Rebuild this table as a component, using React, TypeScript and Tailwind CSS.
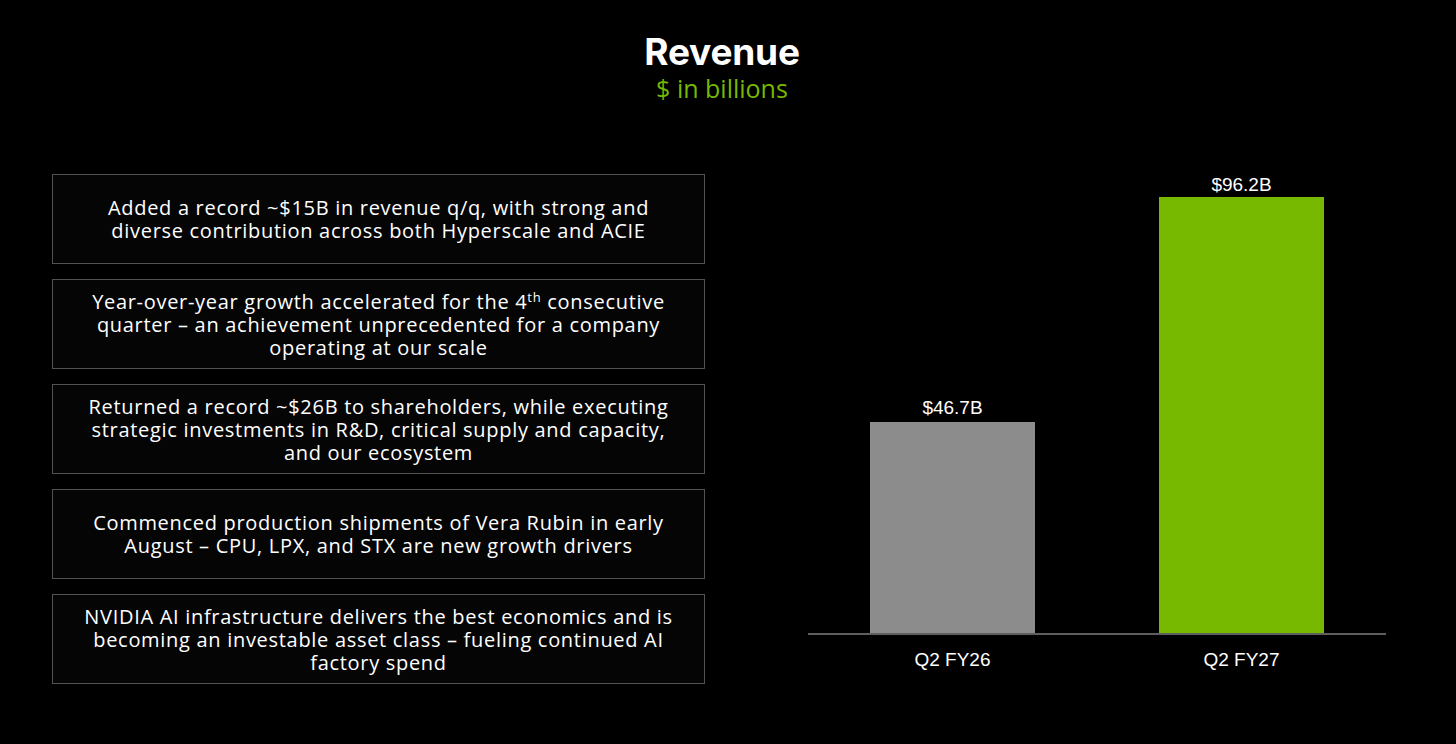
import React from "react";

const boxes: React.ReactNode[][] = [
  [
    "Added a record ~$15B in revenue q/q, with strong and",
    "diverse contribution across both Hyperscale and ACIE",
  ],
  [
    <>
      Year-over-year growth accelerated for the 4<sup className="text-[13px]">th</sup> consecutive
    </>,
    "quarter – an achievement unprecedented for a company",
    "operating at our scale",
  ],
  [
    "Returned a record ~$26B to shareholders, while executing",
    "strategic investments in R&D, critical supply and capacity,",
    "and our ecosystem",
  ],
  [
    "Commenced production shipments of Vera Rubin in early",
    "August – CPU, LPX, and STX are new growth drivers",
  ],
  [
    "NVIDIA AI infrastructure delivers the best economics and is",
    "becoming an investable asset class – fueling continued AI",
    "factory spend",
  ],
];

export default function App() {
  return (
    <div
      className="w-[1456px] h-[744px] bg-black text-white flex flex-col overflow-hidden"
      style={{ fontFamily: '"Open Sans", "Liberation Sans", Arial, sans-serif' }}
    >
      <div className="flex flex-col items-center pt-[30px] pr-[12px]">
        <h1
          className="text-[37px] leading-[44px] font-bold tracking-[-0.2px]"
          style={{ fontFamily: 'Inter, "Liberation Sans", sans-serif' }}
        >
          Revenue
        </h1>
        <div className="text-[25px] leading-[29px] text-[#76b900]">$ in billions</div>
      </div>

      <div className="flex flex-row mt-[71px]">
        <div className="ml-[52px] w-[653px] flex flex-col gap-[15px]">
          {boxes.map((lines, i) => (
            <div
              key={i}
              className="h-[90px] border border-[#525252] bg-[#050505] flex flex-col items-center justify-center text-center text-[20px] leading-[23px] tracking-[0.7px]"
            >
              {lines.map((l, j) => (
                <div key={j} className="whitespace-nowrap">
                  {l}
                </div>
              ))}
            </div>
          ))}
        </div>

        <div
          className="ml-[103px] w-[578px] flex flex-col"
          style={{ fontFamily: '"Liberation Sans", Arial, sans-serif' }}
        >
          <div className="h-[461px] flex flex-row items-end border-b-2 border-[#5e5e5e]">
            <div className="flex-1 flex flex-col items-center justify-end">
              <div className="text-[19px] leading-[22px] mb-[3px]">$46.7B</div>
              <div className="w-[165px] h-[211px] bg-[#8c8c8c]"></div>
            </div>
            <div className="flex-1 flex flex-col items-center justify-end">
              <div className="text-[19px] leading-[22px] mb-[1px]">$96.2B</div>
              <div className="w-[165px] h-[436px] bg-[#76b900]"></div>
            </div>
          </div>
          <div className="flex flex-row mt-[14px]">
            <div className="flex-1 text-center text-[19px] leading-[22px]">Q2 FY26</div>
            <div className="flex-1 text-center text-[19px] leading-[22px]">Q2 FY27</div>
          </div>
        </div>
      </div>
    </div>
  );
}
